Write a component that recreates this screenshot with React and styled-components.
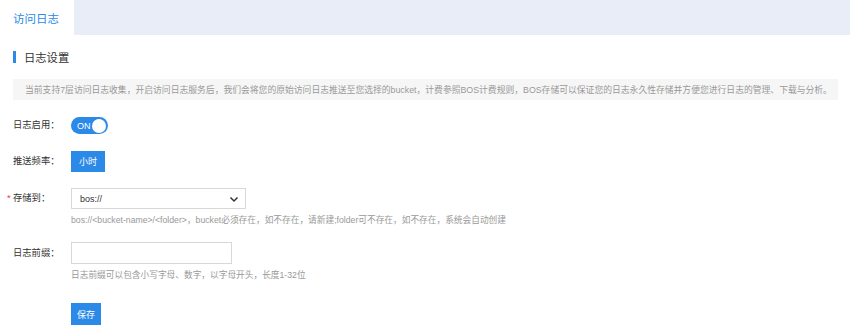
import React, { useState } from "react";
import styled, { createGlobalStyle } from "styled-components";

const GlobalStyle = createGlobalStyle`
    body {
        margin: 0;
        background: #fff;
        font-family: "Liberation Sans", "Noto Sans CJK SC", sans-serif;
        color: #333;
    }
`;

const Page = styled.div`
    width: 850px;
    height: 335px;
    overflow: hidden;
`;

const TabBar = styled.div`
    display: flex;
    height: 35px;
    background: #e9edf7;
`;

const Tab = styled.div`
    width: 74px;
    display: flex;
    align-items: center;
    padding-left: 13px;
    box-sizing: border-box;
    background: ${(props) => (props.active ? "#fff" : "transparent")};
    color: ${(props) => (props.active ? "#2b8ae8" : "#333")};
    font-size: 11.5px;
`;

const Content = styled.div`
    padding: 0 12px 0 13px;
`;

const SectionTitle = styled.div`
    display: flex;
    align-items: center;
    gap: 8px;
    margin-top: 15px;
    height: 14px;
    font-size: 11.3px;
    color: #333;

    &::before {
        content: "";
        width: 3px;
        height: 12px;
        background: #2b8ae8;
    }
`;

const Notice = styled.div`
    margin-top: 15px;
    height: 21px;
    display: flex;
    align-items: center;
    padding-left: 12px;
    background: #f6f6f6;
    color: #999;
    font-size: 8.8px;
    white-space: nowrap;
`;

const Row = styled.div`
    display: flex;
    align-items: flex-start;
    margin-top: ${(props) => props.gap}px;
`;

const Label = styled.div`
    width: 58px;
    flex-shrink: 0;
    height: ${(props) => props.h}px;
    line-height: ${(props) => props.h}px;
    font-size: 9.3px;
    color: #333;
    position: relative;
    white-space: nowrap;
`;

const Required = styled.span`
    position: absolute;
    left: -6px;
    color: #e8413a;
`;

const Control = styled.div`
    display: flex;
    flex-direction: column;
`;

const Help = styled.div`
    margin-top: 4px;
    font-size: 8.7px;
    color: #999;
    white-space: nowrap;
`;

const Switch = styled.button`
    width: 37px;
    height: 17px;
    border: none;
    border-radius: 9px;
    background: #2b8ae8;
    padding: 0 2px 0 6px;
    display: flex;
    align-items: center;
    justify-content: space-between;
    color: #fff;
    font-family: inherit;
    font-size: 9px;
    cursor: pointer;

    &::after {
        content: "";
        width: 14px;
        height: 14px;
        border-radius: 50%;
        background: #fff;
    }
`;

const Button = styled.button`
    height: ${(props) => props.h || 21}px;
    padding: 0 ${(props) => props.px || 8}px;
    border: none;
    background: #2b8ae8;
    color: #fff;
    font-family: inherit;
    font-size: 9px;
    cursor: pointer;
`;

const SelectBox = styled.div`
    width: 175px;
    height: 21px;
    box-sizing: border-box;
    border: 1px solid #d8d8d8;
    display: flex;
    align-items: center;
    justify-content: space-between;
    padding: 0 6px 0 8px;
    font-size: 9px;
    color: #333;
`;

const Input = styled.input`
    width: 161px;
    height: 22px;
    box-sizing: border-box;
    border: 1px solid #d8d8d8;
    outline: none;
    padding: 0 8px;
    font-family: inherit;
    font-size: 9px;
`;

const Chevron = () => (
    <svg width="10" height="8" viewBox="0 0 10 8">
        <path d="M1.5 2.5 L5 6 L8.5 2.5" fill="none" stroke="#333" strokeWidth="1.5" />
    </svg>
);

const App = () => {
    const [enabled, setEnabled] = useState(true);
    const [prefix, setPrefix] = useState("");

    return (
        <Page>
            <GlobalStyle />
            <TabBar>
                <Tab active>访问日志</Tab>
            </TabBar>
            <Content>
                <SectionTitle>日志设置</SectionTitle>
                <Notice>
                    当前支持7层访问日志收集，开启访问日志服务后，我们会将您的原始访问日志推送至您选择的bucket，计费参照BOS计费规则，BOS存储可以保证您的日志永久性存储并方便您进行日志的管理、下载与分析。
                </Notice>

                <Row gap={17}>
                    <Label h={17}>日志启用：</Label>
                    <Switch onClick={() => setEnabled(!enabled)}>{enabled ? "ON" : "OFF"}</Switch>
                </Row>

                <Row gap={17}>
                    <Label h={21}>推送频率：</Label>
                    <Button>小时</Button>
                </Row>

                <Row gap={16}>
                    <Label h={21}>
                        <Required>*</Required>存储到：
                    </Label>
                    <Control>
                        <SelectBox>
                            bos://
                            <Chevron />
                        </SelectBox>
                        <Help>
                            bos://&lt;bucket-name&gt;/&lt;folder&gt;，bucket必须存在，如不存在，请新建;folder可不存在，如不存在，系统会自动创建
                        </Help>
                    </Control>
                </Row>

                <Row gap={16}>
                    <Label h={22}>日志前缀：</Label>
                    <Control>
                        <Input value={prefix} onChange={(e) => setPrefix(e.target.value)} />
                        <Help>日志前缀可以包含小写字母、数字，以字母开头，长度1-32位</Help>
                    </Control>
                </Row>

                <Row gap={22}>
                    <Label h={22} />
                    <Button h={22} px={6}>保存</Button>
                </Row>
            </Content>
        </Page>
    );
};

export default App;
